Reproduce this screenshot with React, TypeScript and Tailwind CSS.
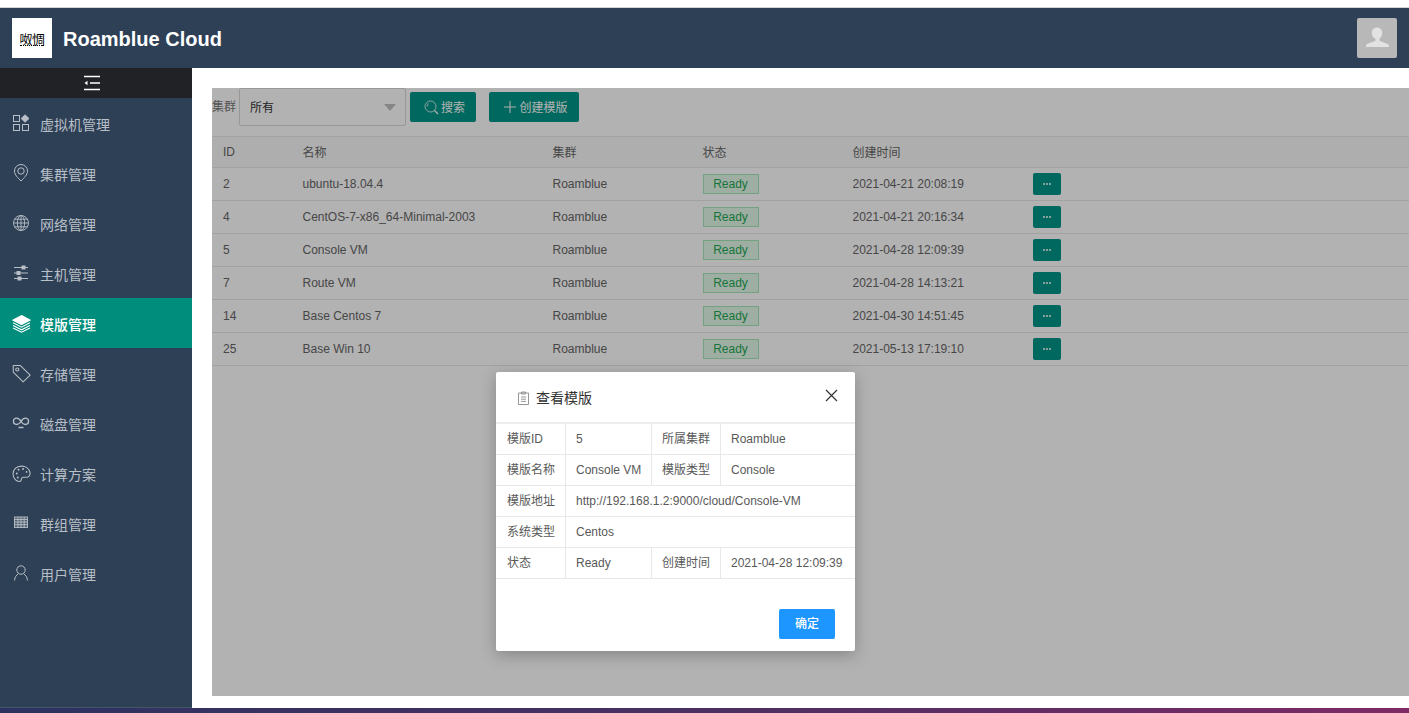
import React from "react";

const FONT = "font-['Liberation_Sans','Noto_Sans_CJK_SC',sans-serif]";

const base = {
  fill: "none",
  stroke: "currentColor",
  strokeWidth: 1,
  viewBox: "0 0 18 18",
  width: 18,
  height: 18,
};

const IconApps = () => (
  <svg {...base}>
    <rect x="1.500" y="1.500" width="6" height="6" />
    <path d="M13 .8 L17 4.500 L13 8.200 L9.200 4.500 Z" fill="currentColor" />
    <rect x="1.500" y="10.500" width="6" height="6" />
    <rect x="10.500" y="10.500" width="6" height="6" />
  </svg>
);
const IconPin = () => (
  <svg {...base}>
    <path d="M9 17 C6 14 2.500 10.800 2.500 7 a6.500 6.500 0 0 1 13 0 C15.500 10.800 12 14 9 17 Z" />
    <circle cx="9" cy="7" r="3.200" />
  </svg>
);
const IconGlobe = () => (
  <svg {...base} strokeWidth={0.9}>
    <circle cx="9" cy="9" r="7.500" />
    <ellipse cx="9" cy="9" rx="3.600" ry="7.500" />
    <path d="M9 1.500V16.500M1.500 9H16.500M2.600 5.200H15.400M2.600 12.800H15.400" />
  </svg>
);
const IconSliders = () => (
  <svg {...base}>
    <path d="M2 3.500H16M2 9H16M2 14.500H16" />
    <rect x="10" y="2" width="3" height="3" fill="currentColor" />
    <rect x="5" y="7.500" width="3" height="3" fill="currentColor" />
    <rect x="6" y="13" width="3" height="3" fill="currentColor" />
  </svg>
);
const IconLayers = () => (
  <svg {...base} width={19} height={19} strokeWidth={1.1}>
    <path d="M9 1.500 L17 5.800 L9 10 L1 5.800 Z" fill="currentColor" />
    <path d="M1 8.300 L9 12.500 L17 8.300M1 10.800 L9 15 L17 10.800M1 13.200 L9 17.200 L17 13.200" />
  </svg>
);
const IconTag = () => (
  <svg {...base} width={19} height={19}>
    <path d="M1.200 1.500 H8 L17.200 10.500 L10.500 17 L1.200 7.800 Z" strokeLinejoin="round" />
    <circle cx="5" cy="5.200" r="1.500" />
  </svg>
);
const IconLoop = () => (
  <svg {...base} strokeWidth={1.4}>
    <path d="M9 7.500 C7.500 4.800 5 3.800 3.300 4.300 C.8 5 .8 9.500 3.300 10.200 C5 10.700 7.500 10 9 7.500 C10.500 4.800 13 3.800 14.700 4.300 C17.200 5 17.200 9.500 14.700 10.200 C13 10.700 10.500 10 9 7.500 Z" />
    <path d="M6.500 13.500H11.500" strokeWidth={1.5} />
  </svg>
);
const IconPalette = () => (
  <svg {...base} width={19} height={19}>
    <path d="M9 2 C4 2 1 5.500 1 9.500 C1 13.500 4 16.500 7 16.500 C9.500 16.500 8.500 14 9.500 13 C10.500 12 13 13 15 12.300 C17 11.500 17.300 9.500 17 8 C16.300 4.500 13 2 9 2 Z" />
    <circle cx="4.500" cy="9" r="0.900" fill="currentColor" stroke="none" />
    <circle cx="6.200" cy="5.500" r="0.900" fill="currentColor" stroke="none" />
    <circle cx="10.500" cy="4.800" r="0.900" fill="currentColor" stroke="none" />
    <circle cx="13.800" cy="7.500" r="0.900" fill="currentColor" stroke="none" />
    <circle cx="5.500" cy="12.800" r="0.900" fill="currentColor" stroke="none" />
  </svg>
);
const IconTable = () => (
  <svg {...base} strokeWidth={0.9}>
    <rect x="2.500" y="3" width="13" height="10.500" fill="currentColor" fillOpacity={0.25} />
    <path d="M2.500 5.500H15.500M2.500 8H15.500M2.500 10.700H15.500M6 3V13.500M9 3V13.500M12.200 3V13.500" />
  </svg>
);
const IconUser = () => (
  <svg {...base}>
    <circle cx="9" cy="6" r="4.200" />
    <path d="M2.500 16.500 C2.800 13 4.500 11 6.200 9.800M15.500 16.500 C15.200 13 13.500 11 11.800 9.800" />
  </svg>
);

const menu: { label: string; icon: React.ReactNode; active?: boolean }[] = [
  { label: "虚拟机管理", icon: <IconApps /> },
  { label: "集群管理", icon: <IconPin /> },
  { label: "网络管理", icon: <IconGlobe /> },
  { label: "主机管理", icon: <IconSliders /> },
  { label: "模版管理", icon: <IconLayers />, active: true },
  { label: "存储管理", icon: <IconTag /> },
  { label: "磁盘管理", icon: <IconLoop /> },
  { label: "计算方案", icon: <IconPalette /> },
  { label: "群组管理", icon: <IconTable /> },
  { label: "用户管理", icon: <IconUser /> },
];

const rows = [
  ["2", "ubuntu-18.04.4", "2021-04-21 20:08:19"],
  ["4", "CentOS-7-x86_64-Minimal-2003", "2021-04-21 20:16:34"],
  ["5", "Console VM", "2021-04-28 12:09:39"],
  ["7", "Route VM", "2021-04-28 14:13:21"],
  ["14", "Base Centos 7", "2021-04-30 14:51:45"],
  ["25", "Base Win 10", "2021-05-13 17:19:10"],
];

const Cell = ({ w, children }: { w: string; children?: React.ReactNode }) => (
  <div className={`${w} shrink-0 pl-[11px] flex items-center`}>{children}</div>
);
const HeadText = ({ children }: { children: React.ReactNode }) => <span className="pt-px">{children}</span>;

const L = ({ children }: { children: React.ReactNode }) => (
  <div className="w-[70px] shrink-0 border-r border-[#e8e8e8] pl-[11px] flex items-center">{children}</div>
);
const DRow = ({ children }: { children: React.ReactNode }) => (
  <div className="flex h-[31px] border-b border-[#e8e8e8] text-[12px] text-[#595959]">{children}</div>
);
const V1 = ({ children }: { children: React.ReactNode }) => (
  <div className="w-[86px] shrink-0 border-r border-[#e8e8e8] pl-[10px] flex items-center">{children}</div>
);
const L2 = ({ children }: { children: React.ReactNode }) => (
  <div className="w-[69px] shrink-0 border-r border-[#e8e8e8] pl-[10px] flex items-center">{children}</div>
);
const V2 = ({ children }: { children: React.ReactNode }) => (
  <div className="flex-1 pl-[10px] flex items-center whitespace-nowrap">{children}</div>
);

export default function App() {
  return (
    <div className={`${FONT} w-[1409px] h-[713px] overflow-hidden bg-white flex flex-col`}>
      <div className="h-[7px] shrink-0 bg-white" />
      <div className="h-px shrink-0 bg-[#d5d5d5]" />
      <header className="h-[60px] shrink-0 bg-[#2d4056] flex items-center pl-3 pr-3 justify-between">
        <div className="flex items-center">
          <div className="w-10 h-10 bg-white flex flex-col items-center justify-center pt-[1px]">
            <span className="text-[13px] leading-[13px] text-black font-['Noto_Sans_CJK_SC',sans-serif] tracking-[-0.5px]">呶惆</span>
            <div className="w-[24px] h-px border-t border-dotted border-black" />
          </div>
          <span className="ml-[11px] text-[20px] font-bold text-white pt-[2px]">Roamblue Cloud</span>
        </div>
        <div className="w-10 h-10 rounded-[2px] bg-[#b8b8b8] flex items-center justify-center">
          <svg width="24" height="24" viewBox="0 0 24 24" fill="#e2e2e2">
            <path d="M12 1.500c3 0 5.200 2.200 5.200 5.200 0 2.800-1.300 5-2.700 6.100v1.600c0 .8 5.500 2.200 8 3.400 1 .5 1.500 1.200 1.500 3.200H1c0-2 .5-2.700 1.500-3.200 2.500-1.200 8-2.600 8-3.400v-1.600C8.100 11.700 6.800 9.500 6.800 6.700c0-3 2.200-5.200 5.200-5.200z" />
          </svg>
        </div>
      </header>

      <div className="flex flex-1 min-h-0">
        <aside className="w-[192px] shrink-0 bg-[#2d4056] flex flex-col">
          <div className="h-[30px] bg-[#202226] flex items-center justify-center pr-2">
            <svg width="18" height="16" viewBox="0 0 18 16" fill="none" stroke="#fff" strokeWidth="1.500">
              <path d="M1 1.500H17M7 8H17M1 14.500H17" />
              <path d="M1.500 8 L4.500 5.800 V10.200 Z" fill="#fff" stroke="none" />
            </svg>
          </div>
          {menu.map((m) => (
            <div
              key={m.label}
              className={`h-[50px] shrink-0 flex items-center pl-3 pt-1 text-[14px] ${
                m.active ? "bg-[#008d7c] text-white font-medium" : "text-[#b9bfc6]"
              }`}
            >
              <span className="w-[19px] h-[19px] flex items-center justify-start -mt-1">{m.icon}</span>
              <span className="ml-[9px]">{m.label}</span>
            </div>
          ))}
          <div className="flex-1" />
          <div className="h-px bg-[#42566a]" />
        </aside>

        <main className="flex-1 min-w-0 flex flex-col pt-5 pl-5 pb-3 relative">
          <div className="flex-1 bg-white relative">
            <div className="flex items-start h-[48px]">
              <span className="text-[12px] text-[#777] mt-[10px] w-[27px]">集群</span>
              <div className="w-[167px] h-[38px] border border-[#d9d9d9] rounded-[2px] flex items-center justify-between pl-[10px] pr-[9px] text-[12px] text-[#333]">
                <span className="pt-[2px]">所有</span>
                <span className="w-0 h-0 border-x-[6px] border-x-transparent border-t-[7px] border-t-[#c0c0c0]" />
              </div>
              <button className="ml-1 mt-1 w-[66px] h-[30px] rounded-[2px] bg-[#009688] text-white text-[12px] flex items-center justify-center gap-[2px] pl-[3px]">
                <svg width="15" height="15" viewBox="0 0 15 15" fill="none" stroke="currentColor" strokeWidth="0.800">
                  <circle cx="6.500" cy="6.500" r="5.500" />
                  <path d="M10.500 10.500 L14 14" strokeWidth="1.200" />
                  <path d="M3 6.500a3.500 3.500 0 0 1 2-3" />
                </svg>
                <span className="pt-[2px]">搜索</span>
              </button>
              <button className="ml-[13px] mt-1 w-[90px] h-[30px] rounded-[2px] bg-[#009688] text-white text-[12px] flex items-center justify-center gap-[2px] pl-[3px]">
                <svg width="14" height="14" viewBox="0 0 14 14" stroke="currentColor" strokeWidth="1">
                  <path d="M7 1V13M1 7H13" />
                </svg>
                <span className="pt-[2px]">创建模版</span>
              </button>
            </div>

            <div className="text-[12px] text-[#666] border-t border-[#e8e8e8]">
              <div className="flex h-[31px] border-b border-[#e8e8e8] bg-[#fafafa]">
                <Cell w="w-[79.5px]">ID</Cell>
                <Cell w="w-[250px]"><HeadText>名称</HeadText></Cell>
                <Cell w="w-[150px]"><HeadText>集群</HeadText></Cell>
                <Cell w="w-[150px]"><HeadText>状态</HeadText></Cell>
                <Cell w="w-[180.5px]"><HeadText>创建时间</HeadText></Cell>
                <Cell w="flex-1" />
              </div>
              {rows.map((r) => (
                <div key={r[0]} className="flex h-[33px] border-b border-[#e8e8e8]">
                  <Cell w="w-[79.5px]">{r[0]}</Cell>
                  <Cell w="w-[250px]">{r[1]}</Cell>
                  <Cell w="w-[150px]">Roamblue</Cell>
                  <Cell w="w-[150px]">
                    <span className="w-[56px] h-[20px] border border-[#a5e8ba] bg-[#e3f9e9] text-[#1fa855] flex items-center justify-center">
                      Ready
                    </span>
                  </Cell>
                  <Cell w="w-[180.5px]">{r[2]}</Cell>
                  <Cell w="flex-1">
                    <button className="w-[28px] h-[22px] rounded-[2px] bg-[#009688] flex items-center justify-center gap-[1.500px]">
                      <i className="block w-[1.500px] h-[1.500px] rounded-full bg-white" />
                      <i className="block w-[1.500px] h-[1.500px] rounded-full bg-white" />
                      <i className="block w-[1.500px] h-[1.500px] rounded-full bg-white" />
                    </button>
                  </Cell>
                </div>
              ))}
            </div>

            {/* backdrop */}
            <div className="absolute inset-0 bg-black/30" />

            {/* dialog */}
            <div className="absolute left-[284px] top-[284px] w-[359px] h-[279px] bg-white rounded-[2px] shadow-[0_4px_16px_rgba(0,0,0,0.25)] flex flex-col">
              <div className="h-[52px] shrink-0 flex items-center pl-5 pr-4 justify-between border-b-2 border-[#ededed]">
                <div className="flex items-center text-[14px] text-[#333] mt-[2px]">
                  <svg width="15" height="15" viewBox="0 0 15 15" fill="none" stroke="#8a8a8a" strokeWidth="0.900" className="mr-[5px]">
                    <path d="M2.500 2H12.500V13.500H2.500Z" />
                    <path d="M5.500 1H9.500V3H5.500ZM5 6H10M5 8.200H10M5 10.400H10" />
                  </svg>
                  <span className="pt-px">查看模版</span>
                </div>
                <svg width="13" height="13" viewBox="0 0 13 13" stroke="#333" strokeWidth="1.200" className="-mt-[4px] mr-[1px]">
                  <path d="M1 1L12 12M12 1L1 12" />
                </svg>
              </div>
              <DRow>
                <L>模版ID</L>
                <V1>5</V1>
                <L2>所属集群</L2>
                <V2>Roamblue</V2>
              </DRow>
              <DRow>
                <L>模版名称</L>
                <V1>Console VM</V1>
                <L2>模版类型</L2>
                <V2>Console</V2>
              </DRow>
              <DRow>
                <L>模版地址</L>
                <V2>http://192.168.1.2:9000/cloud/Console-VM</V2>
              </DRow>
              <DRow>
                <L>系统类型</L>
                <V2>Centos</V2>
              </DRow>
              <DRow>
                <L>状态</L>
                <V1>Ready</V1>
                <L2>创建时间</L2>
                <V2>2021-04-28 12:09:39</V2>
              </DRow>
              <div className="flex-1 flex justify-end items-end pr-5 pb-3">
                <button className="w-[56px] h-[30px] rounded-[2px] bg-[#1e96ff] text-white text-[12px] font-medium">确定</button>
              </div>
            </div>
          </div>
        </main>
      </div>

      <div className="h-[5px] shrink-0 bg-[linear-gradient(90deg,#2c3260,#4a2f62,#7e2a66)]" />
    </div>
  );
}
